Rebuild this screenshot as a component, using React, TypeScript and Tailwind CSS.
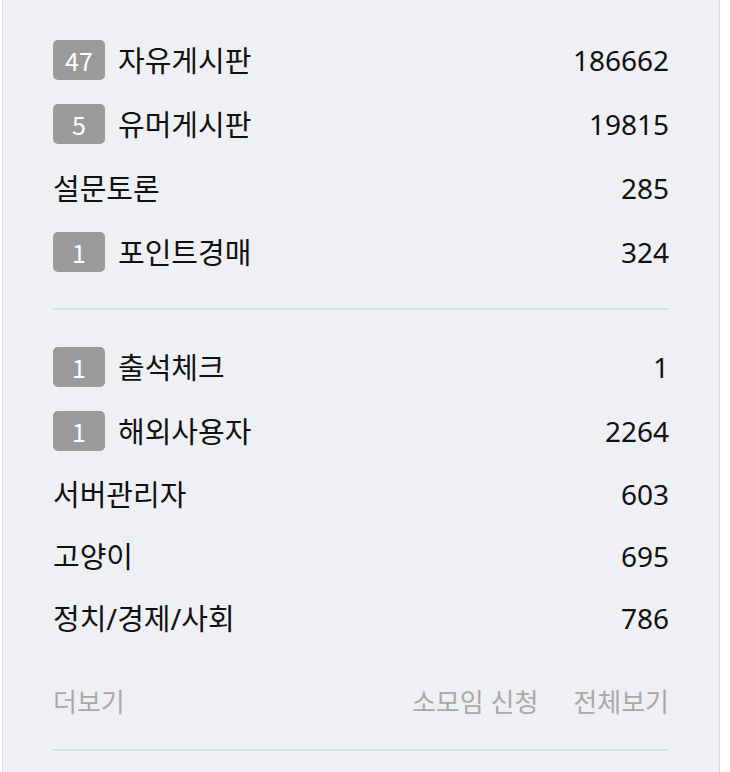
import React from "react";

type Row = { badge?: string; name: string; count: string; h: string };

const section1: Row[] = [
  { badge: "47", name: "자유게시판", count: "186662", h: "h-[64px]" },
  { badge: "5", name: "유머게시판", count: "19815", h: "h-[64px]" },
  { name: "설문토론", count: "285", h: "h-[64px]" },
  { badge: "1", name: "포인트경매", count: "324", h: "h-[64px]" },
];

const section2: Row[] = [
  { badge: "1", name: "출석체크", count: "1", h: "h-[64px]" },
  { badge: "1", name: "해외사용자", count: "2264", h: "h-[64px]" },
  { name: "서버관리자", count: "603", h: "h-[62px]" },
  { name: "고양이", count: "695", h: "h-[62px]" },
  { name: "정치/경제/사회", count: "786", h: "h-[62px]" },
];

function RowItem({ r }: { r: Row }) {
  return (
    <div className={`flex items-center justify-between ${r.h}`}>
      <div className="flex items-center">
        {r.badge && (
          <span
            className="mr-[13px] flex h-[40px] w-[52px] items-center justify-center rounded-[5px] bg-[#9a9a9a] text-[25px] leading-none text-white"
            style={{ fontFamily: '"Noto Sans CJK KR", sans-serif' }}
          >
            {r.badge}
          </span>
        )}
        <span className="text-[29px] leading-none text-[#111111]">{r.name}</span>
      </div>
      <span className="text-[28px] leading-none text-[#111111]">{r.count}</span>
    </div>
  );
}

export default function App() {
  return (
    <div className="min-h-[772px] w-[730px] bg-white" style={{ fontFamily: '"Noto Sans", "Noto Sans CJK KR", sans-serif' }}>
      <div className="ml-[2px] h-[772px] w-[718px] border-x border-[#d3d9e2] bg-[#eff0f3] px-[50px] pt-[28px]">
        {section1.map((r) => (
          <RowItem key={r.name} r={r} />
        ))}
        <div className="mt-[24px] h-[2px] bg-[#dbe0e7]" />
        <div className="mt-[25px]">
          {section2.map((r) => (
            <RowItem key={r.name} r={r} />
          ))}
        </div>
        <div className="mt-[33px] flex h-[40px] items-center justify-between text-[26px] leading-none text-[#a9a9a9]">
          <span>더보기</span>
          <div className="flex items-center gap-[35px]">
            <span>소모임 신청</span>
            <span>전체보기</span>
          </div>
        </div>
        <div className="mt-[27px] h-[2px] bg-[#dbe0e7]" />
      </div>
    </div>
  );
}
